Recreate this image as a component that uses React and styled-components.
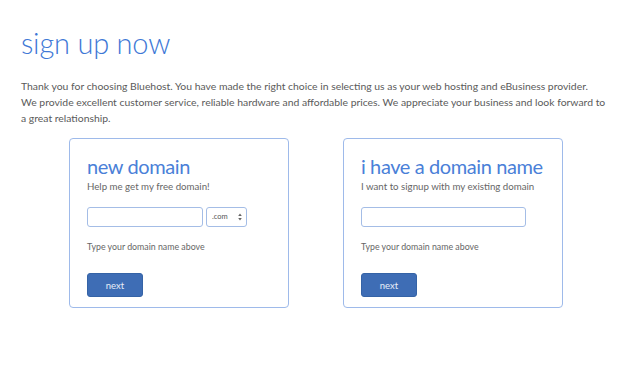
import React from "react";
import styled, { createGlobalStyle } from "styled-components";

const GlobalStyle = createGlobalStyle`
  html, body {
    margin: 0;
    padding: 0;
    background: #ffffff;
  }
  body {
    font-family: Lato, "Open Sans", sans-serif;
  }
`;

const Page = styled.div`
  width: 624px;
  height: 367px;
  padding: 25px 0 0 21px;
  box-sizing: border-box;
  overflow: hidden;
`;

const Title = styled.h1`
  margin: 0;
  font-size: 29px;
  font-weight: 300;
  line-height: 36px;
  color: #3e78d6;
  letter-spacing: -0.2px;
`;

const Intro = styled.p`
  margin: 17px 0 0;
  width: 600px;
  font-size: 10.4px;
  line-height: 16px;
  color: #5a5a5a;
`;

const Cards = styled.div`
  display: flex;
  gap: 54px;
  margin: 12px 0 0 48px;
`;

const Card = styled.div`
  width: 220px;
  height: 170px;
  box-sizing: border-box;
  border: 1.5px solid #9ebaea;
  border-radius: 4px;
  padding: 15px 17px 0;
  display: flex;
  flex-direction: column;
`;

const CardTitle = styled.h2`
  margin: 0;
  font-size: 20px;
  font-weight: 400;
  line-height: 24px;
  color: #4a80d8;
  letter-spacing: -0.4px;
  white-space: nowrap;
`;

const CardSub = styled.div`
  margin-top: 1px;
  font-size: 9.7px;
  line-height: 14px;
  color: #666;
  white-space: nowrap;
`;

const InputRow = styled.div`
  display: flex;
  gap: 3px;
  margin-top: 14px;
`;

const Field = styled.input`
  width: ${(p) => p.$w}px;
  height: 20px;
  box-sizing: border-box;
  border: 1.5px solid #a4bde6;
  border-radius: 3px;
  padding: 0 4px;
  font: inherit;
  outline: none;
`;

const Select = styled.div`
  width: 41px;
  height: 20px;
  box-sizing: border-box;
  border: 1.5px solid #a4bde6;
  border-radius: 3px;
  display: flex;
  align-items: center;
  justify-content: space-between;
  padding: 0 4px 0 5px;
  font-size: 7.5px;
  line-height: 10px;
  color: #555;
`;

const Hint = styled.div`
  margin-top: 13px;
  font-size: 8.8px;
  line-height: 14px;
  color: #666;
`;

const NextButton = styled.button`
  margin-top: 19px;
  width: 56px;
  height: 24px;
  border: 1px solid #3563a6;
  border-radius: 3px;
  background: #3e6db5;
  color: #e8eef8;
  font-family: inherit;
  font-size: 9.5px;
  padding: 0;
  cursor: pointer;
`;

const SelectArrows = () => (
  <svg width="4" height="8" viewBox="0 0 4 8">
    <path d="M2 0.5 L3.8 3 H0.2 Z M2 7.5 L3.8 5 H0.2 Z" fill="#666" />
  </svg>
);

const App = () => {
  return (
    <>
      <GlobalStyle />
      <Page>
        <Title>sign up now</Title>
        <Intro>
          Thank you for choosing Bluehost. You have made the right choice in
          selecting us as your web hosting and eBusiness provider.
          <br />
          We provide excellent customer service, reliable hardware and
          affordable prices. We appreciate your business and look forward to
          <br />a great relationship.
        </Intro>
        <Cards>
          <Card>
            <CardTitle>new domain</CardTitle>
            <CardSub>Help me get my free domain!</CardSub>
            <InputRow>
              <Field $w={116} />
              <Select>
                <span>.com</span>
                <SelectArrows />
              </Select>
            </InputRow>
            <Hint>Type your domain name above</Hint>
            <div>
              <NextButton>next</NextButton>
            </div>
          </Card>
          <Card>
            <CardTitle>i have a domain name</CardTitle>
            <CardSub>I want to signup with my existing domain</CardSub>
            <InputRow>
              <Field $w={165} />
            </InputRow>
            <Hint>Type your domain name above</Hint>
            <div>
              <NextButton>next</NextButton>
            </div>
          </Card>
        </Cards>
      </Page>
    </>
  );
};

export default App;
